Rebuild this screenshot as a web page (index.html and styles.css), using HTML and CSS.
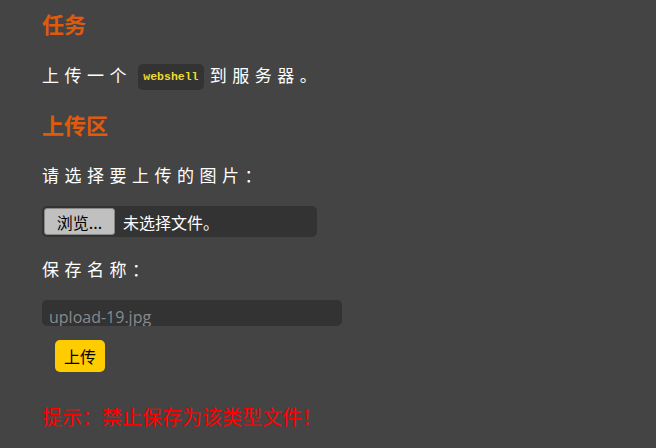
FILE: index.html
```html
<!DOCTYPE html>
<html lang="zh-CN">
<head>
<meta charset="UTF-8">
<title>上传</title>
<link rel="stylesheet" href="styles.css">
</head>
<body>
<div class="main">
<h2 class="title">任务</h2>
<p class="text task">上传一个 <code class="code">webshell</code> 到服务器。</p>
<h2 class="title second">上传区</h2>
<form class="upload" onsubmit="return false">
<p class="text">请选择要上传的图片：</p>
<div class="filebox">
<span class="browse">浏览...</span>
<span class="nofile">未选择文件。</span>
</div>
<p class="text">保存名称：</p>
<div class="namebox"><span class="name">upload-19.jpg</span></div>
<button class="submit" type="button">上传</button>
</form>
<p class="tip">提示：禁止保存为该类型文件！</p>
</div>
</body>
</html>
```
FILE: styles.css
```css
html, body {
	margin: 0;
	background-color: #444444;
}

body {
	font-family: "Noto Sans CJK SC", "Noto Sans", sans-serif;
	color: #ffffff;
}

div.main {
	padding: 9px 42px 0 42px;
}

.title {
	margin: 0 0 25.5px 0;
	font-size: 22px;
	line-height: 28px;
	font-weight: bold;
	color: #e05a0c;
}

.title.second {
	margin-top: 20px;
}

.text {
	margin: 19.5px 0 19px 0;
	font-size: 17px;
	line-height: 24px;
	letter-spacing: 5.5px;
}

.text.task {
	word-spacing: -3px;
}

.code {
	display: inline-block;
	font-family: "Liberation Mono", monospace;
	font-size: 11.5px;
	font-weight: bold;
	line-height: 26px;
	letter-spacing: 0;
	word-spacing: 0;
	color: #eedc30;
	background-color: #333333;
	border-radius: 5px;
	padding: 0 5px;
	vertical-align: middle;
}

.filebox {
	display: flex;
	align-items: center;
	width: 275px;
	height: 31px;
	box-sizing: border-box;
	padding: 2px;
	background-color: #333333;
	border-radius: 5px;
}

.browse {
	display: inline-block;
	width: 71px;
	height: 27px;
	line-height: 27px;
	box-sizing: border-box;
	text-align: center;
	color: #000000;
	background-color: #c0c0c0;
	border: 1px solid #888888;
	border-radius: 3px;
	font-size: 16px;
}

.nofile {
	margin-left: 8px;
	font-size: 16px;
}

.namebox {
	width: 300px;
	height: 26px;
	background-color: #333333;
	border-radius: 5px;
	overflow: hidden;
	font-family: "Open Sans", "Noto Sans", sans-serif;
	font-size: 16px;
	line-height: 26px;
	color: #8a8a8a;
}

.name {
	display: block;
	padding: 4px 0 0 7px;
}

.submit {
	display: block;
	margin: 14px 0 0 13px;
	width: 50px;
	height: 32px;
	padding: 0;
	border: none;
	border-radius: 5px;
	background-color: #ffcc00;
	color: #000000;
	font-family: "Noto Sans CJK SC", sans-serif;
	font-size: 16px;
}

.tip {
	margin: 31px 0 0 0;
	font-size: 20px;
	line-height: 28px;
	color: #ff0000;
}
```
